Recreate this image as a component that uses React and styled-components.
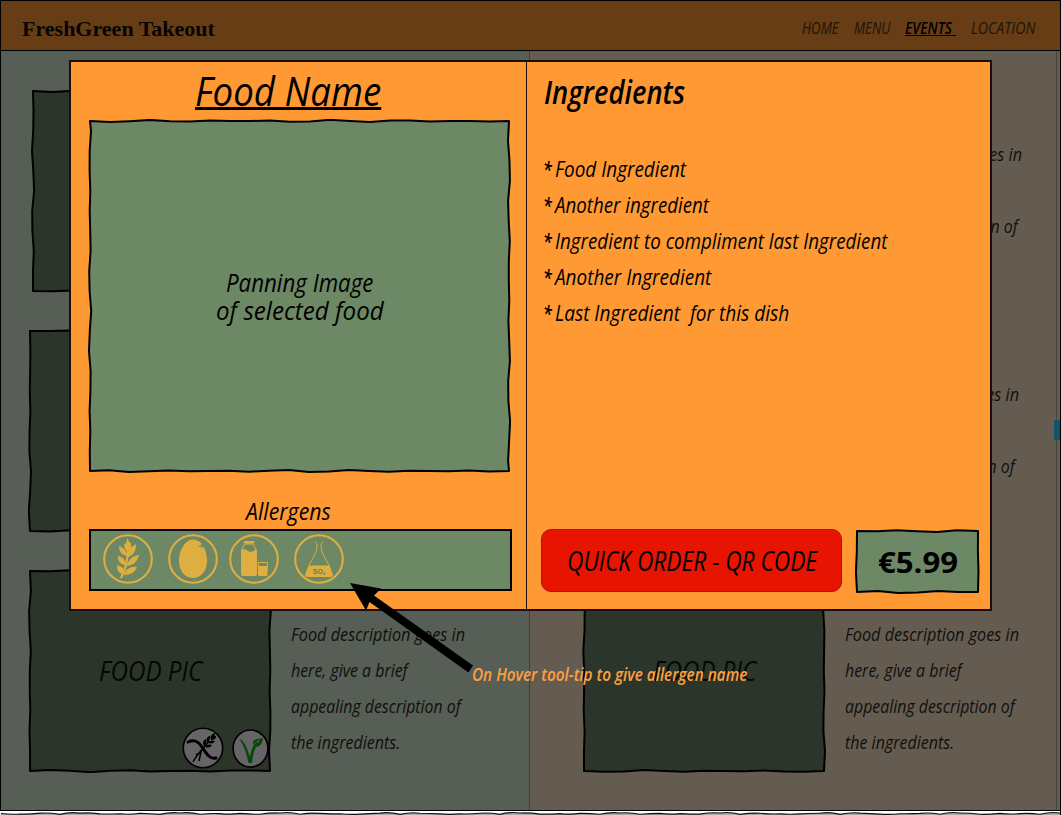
import React, { useLayoutEffect, useRef, useState } from "react";
import styled, { createGlobalStyle } from "styled-components";

const GlobalStyle = createGlobalStyle`
  * { box-sizing: border-box; }
  body { margin: 0; background: #fff; overflow: hidden; }
`;

const sketchFont = `"Open Sans", "Noto Sans", sans-serif`;

/* ---------- condensed handwriting-like text ---------- */

const TextSlot = styled.span`
  display: block;
  flex: none;
  width: ${(p) => p.$width}px;
  height: ${(p) => p.$line}px;
`;

const TextInk = styled.span`
  display: inline-block;
  white-space: pre;
  transform-origin: 0 0;
  font-family: ${(p) => (p.$serif ? `"Liberation Serif", serif` : sketchFont)};
  font-style: ${(p) => (p.$upright ? "normal" : "italic")};
  font-weight: ${(p) => p.$weight};
  font-size: ${(p) => p.$size}px;
  line-height: ${(p) => p.$line}px;
  color: ${(p) => p.$color};
  text-decoration: ${(p) => (p.$underline ? "underline" : "none")};
  text-decoration-thickness: ${(p) => p.$underline || 0}px;
  text-underline-offset: ${(p) => p.$offset || 1}px;
  text-decoration-skip-ink: none;
`;

function Condensed({ width, size, line = 36, weight = 400, color = "#000", serif, upright, underline, offset, children }) {
  const ink = useRef(null);
  const [scale, setScale] = useState(1);
  useLayoutEffect(() => {
    setScale(width / ink.current.offsetWidth);
  }, [width, size, children]);
  return (
    <TextSlot $width={width} $line={line}>
      <TextInk
        ref={ink}
        $size={size}
        $line={line}
        $weight={weight}
        $color={color}
        $serif={serif}
        $upright={upright}
        $underline={underline}
        $offset={offset}
        style={{ transform: `scaleX(${scale})` }}
      >
        {children}
      </TextInk>
    </TextSlot>
  );
}

/* ---------- hand-drawn box ---------- */

function wobble(w, h, seed) {
  const n = (i) => Math.sin(i * 2.3 + seed) * 0.75 + Math.sin(i * 5.1 + seed * 3) * 0.45;
  const pts = [];
  const step = 20;
  const m = 2;
  for (let x = m; x < w - m - 8; x += step) pts.push([x, m + (x > m ? n(x) : 0)]);
  for (let y = m; y < h - m - 8; y += step) pts.push([w - m + (y > m ? n(y + 7) : 0), y]);
  for (let x = w - m; x > m + 8; x -= step) pts.push([x, h - m + (x < w - m ? n(x + 3) : 0)]);
  for (let y = h - m; y > m + 8; y -= step) pts.push([m + (y < h - m ? n(y + 5) : 0), y]);
  return "M" + pts.map((p) => p.map((v) => v.toFixed(1)).join(" ")).join("L") + "Z";
}

const Box = styled.div`
  position: relative;
  flex: none;
  width: ${(p) => p.$w}px;
  height: ${(p) => p.$h}px;
  margin: ${(p) => p.$margin || 0};
  display: flex;
  flex-direction: column;
  align-items: center;
  justify-content: center;
`;

const BoxOutline = styled.svg`
  position: absolute;
  inset: 0;
  z-index: 0;
`;

const BoxContent = styled.div`
  position: relative;
  display: flex;
  flex-direction: column;
  align-items: center;
`;

function SketchBox({ w, h, fill, seed = 1, margin, overlay, children }) {
  return (
    <Box $w={w} $h={h} $margin={margin}>
      <BoxOutline width={w} height={h}>
        <path d={wobble(w, h, seed)} fill={fill} stroke="#000" strokeWidth="2" strokeLinejoin="round" />
      </BoxOutline>
      <BoxContent>{children}</BoxContent>
      {overlay}
    </Box>
  );
}

/* ---------- page behind the dialog ---------- */

const Screen = styled.div`
  position: relative;
  width: 1061px;
  height: 815px;
  overflow: hidden;
  border-right: 1px solid #000;
`;

const Page = styled.div`
  width: 1060px;
  height: 811px;
  border: 1px solid #000;
  border-right: 0;
  display: flex;
  flex-direction: column;
`;

const Header = styled.header`
  height: 50px;
  flex: none;
  background: #663d15;
  border-bottom: 1px solid #000;
  display: flex;
  justify-content: space-between;
  padding: 0 25px 0 21px;
`;

const Brand = styled.div`
  padding-top: 10px;
`;

const Nav = styled.nav`
  display: flex;
  gap: 15px;
  padding-top: 9px;
`;

const Columns = styled.main`
  flex: 1;
  display: flex;
  min-height: 0;
`;

const Column = styled.section`
  width: ${(p) => p.$w}px;
  background: ${(p) => p.$bg};
  border-right: 1px solid ${(p) => p.$edge};
  padding: 38px 0 0 ${(p) => p.$pad}px;
  display: flex;
  flex-direction: column;
  gap: 36px;
`;

const Gutter = styled.div`
  flex: 1;
  background: #655c51;
  padding-top: 369px;
`;

const Dish = styled.article`
  display: flex;
  gap: 19px;
  height: 204px;
  margin-left: ${(p) => p.$shift}px;
`;

const Description = styled.div`
  padding-top: 47px;
`;

const Badges = styled.div`
  position: absolute;
  right: 3px;
  bottom: 4px;
  display: flex;
  align-items: center;
  gap: 8px;
`;

const ScrollThumb = styled.div`
  width: 6px;
  height: 20px;
  margin-left: -3px;
  position: relative;
  background: #155468;
`;

function DietBadges() {
  return (
    <Badges>
      <svg width="42" height="42" viewBox="0 0 42 42">
        <circle cx="21" cy="21" r="19.7" fill="#666466" stroke="#000" strokeWidth="1.6" />
        <path d="M6 15C12 12 16 14 20 20S28 33 34 31" fill="none" stroke="#000" strokeWidth="3" strokeLinecap="round" />
        <path d="M11 35C15 27 21 22 27 14M14 28l5-3-2 9" fill="none" stroke="#000" strokeWidth="1.5" />
        <g fill="#000">
          <path d="M22 19c-2-4 0-6 2-7 1 3 0 5-2 7ZM25 15c-1-4 1-6 3-6 1 3-1 5-3 6ZM29 12c-1-3 1-5 4-6 0 3-1 5-4 6Z" />
          <path d="M23 20c4 1 6 0 7-2-3-1-5-1-7 2ZM26 16c4 1 6 0 7-2-3-1-5-1-7 2ZM29 13c3 0 5-1 5-4-3 0-5 1-5 4Z" />
        </g>
      </svg>
      <svg width="37" height="41" viewBox="0 0 37 41">
        <ellipse cx="18.5" cy="20.5" rx="17.4" ry="18.5" fill="#666466" stroke="#000" strokeWidth="1.6" />
        <path d="M7 11C12 11 16 23 18 29C20 20 21 17 25 14L27 16C22 20 21 26 20 35H16.500C15 26 11 15 7 11Z" fill="#06480a" />
        <path d="M21 17C20 11 25 11 31 10C30 17 27 20 22 18C25 16 27 14 28 12C25 13 23 15 21 17Z" fill="#06480a" />
      </svg>
    </Badges>
  );
}

const blurb = [
  ["Food description goes in", 174],
  ["here, give a brief", 117],
  ["appealing description of", 170],
  ["the ingredients.", 109],
];

function DishRow({ shift, seed, badges }) {
  return (
    <Dish $shift={shift}>
      <SketchBox w={244} h={204} fill="#2c3529" seed={seed} overlay={badges && <DietBadges />}>
        <Condensed width={103} size={27} color="#060705">FOOD PIC</Condensed>
      </SketchBox>
      <Description>
        {blurb.map(([text, width]) => (
          <Condensed key={text} width={width} size={18.5} color="#100f0c">{text}</Condensed>
        ))}
      </Description>
    </Dish>
  );
}

/* ---------- dialog ---------- */

const Dialog = styled.div`
  position: absolute;
  left: 69px;
  top: 60px;
  width: 923px;
  height: 551px;
  border: 2px solid #1a0f05;
  background: #ff9933;
  display: flex;
`;

const FoodPane = styled.section`
  width: 456px;
  flex: none;
  border-right: 1px solid #1a0f05;
`;

const FoodTitle = styled.h1`
  margin: 0;
  height: 57px;
  padding-left: 124px;
  font-weight: 400;
`;

const AllergenTitle = styled.h2`
  margin: 0;
  padding: 20px 0 0 175px;
  height: 56px;
`;

const AllergenBar = styled.div`
  margin-left: 18px;
  width: 423px;
  height: 62px;
  border: 2px solid #000;
  background: #6c8865;
  display: flex;
  align-items: center;
  padding: 0 0 2px 12px;
`;

const AllergenIcon = styled.svg`
  flex: none;
  width: 50px;
  height: 50px;
  margin-right: ${(p) => p.$gap || 0}px;
  color: #dfae41;
`;

const OrderPane = styled.section`
  flex: 1;
  padding-left: 14px;
  display: flex;
  flex-direction: column;
`;

const PaneHeading = styled.h2`
  margin: 0;
  padding: 12px 0 0 3px;
  height: 89px;
`;

const IngredientList = styled.ul`
  list-style: none;
  margin: 0;
  padding: 0 0 0 2px;
  height: 378px;
`;

const Ingredient = styled.li`
  height: 36px;
  display: flex;
  gap: 3px;
`;

const OrderRow = styled.div`
  display: flex;
  gap: 13px;
`;

const OrderButton = styled.button`
  width: 301px;
  height: 63px;
  border: 1px solid #b31205;
  border-radius: 10px;
  background: #e61400;
  padding: 0;
  display: flex;
  align-items: center;
  justify-content: center;
`;

const Ring = () => <circle cx="25" cy="25" r="23.800" fill="none" stroke="currentColor" strokeWidth="2.1" />;

function Wheat() {
  return (
    <AllergenIcon viewBox="0 0 50 50" $gap={15}>
      <Ring />
      <g fill="currentColor">
        <path d="M24.500 4L26 8L28 9V14L25 18L22 15L21 11L23 9Z" />
        <path d="M16 12C21 14 24 17 24 22C19 21 16 18 16 12ZM15 22C20 23 23 26 23 31C18 31 15 28 15 22ZM14 31C19 32 22 35 21 40C16 40 14 37 14 31Z" />
        <path d="M33 10C33 17 31 21 25 23C24 17 27 13 33 10ZM36 21C34 28 31 31 24 32C25 26 29 22 36 21ZM34 33C32 38 28 41 21 41C23 35 27 32 34 33Z" />
      </g>
      <path d="M25 13Q25 31 18 44" fill="none" stroke="currentColor" strokeWidth="2.2" />
    </AllergenIcon>
  );
}

function Egg() {
  return (
    <AllergenIcon viewBox="0 0 50 50" $gap={11}>
      <Ring />
      <path d="M25 5.500C30 5.500 34 10 34 10L30 13L34 12.500L33 15L35.500 12.500C38 17 39 22 39 27C39 37 33 44 25 44S11 37 11 27C11 15 18 5.500 25 5.500Z" fill="currentColor" />
    </AllergenIcon>
  );
}

function Milk() {
  return (
    <AllergenIcon viewBox="0 0 50 50" $gap={15}>
      <Ring />
      <rect x="14.500" y="7" width="11" height="2.500" rx="1" fill="currentColor" />
      <path d="M15.500 10L12.500 16.500V40Q12.500 41.500 14 41.500H26Q27.300 41.500 27.300 40V16.500L24.500 10Z" fill="none" stroke="currentColor" strokeWidth="1" />
      <path d="M12 16C15 15 16 15 19 17S24 17 27.800 15V40Q27.800 42 26 42H14Q12 42 12 40Z" fill="currentColor" />
      <path d="M29 28.500H38.500L37.800 41.500H29.700Z" fill="none" stroke="currentColor" strokeWidth="1" />
      <path d="M29 32H38.500L38 42H29.500Z" fill="currentColor" />
    </AllergenIcon>
  );
}

function Sulphite() {
  return (
    <AllergenIcon viewBox="0 0 50 50">
      <Ring />
      <path d="M21 7.500Q23 9 23 12C23 19 18 25 15 31.500M29 7.500Q27 9 27 12C27 19 32 25 35 31.500" fill="none" stroke="currentColor" strokeWidth="1" />
      <path d="M14.500 31.500H35.500L38.800 40Q39.500 43 36 43H14Q10.500 43 11.200 40Z" fill="currentColor" />
      <text x="25" y="39.500" textAnchor="middle" fontFamily="Liberation Sans, sans-serif" fontSize="7" fontWeight="700" fill="#6c7848">
        SO<tspan fontSize="4" dy="1">2</tspan>
      </text>
    </AllergenIcon>
  );
}

const ingredients = [
  ["Food Ingredient", 131],
  ["Another ingredient", 154],
  ["Ingredient to compliment last Ingredient", 332],
  ["Another Ingredient", 156],
  ["Last Ingredient  for this dish", 234],
];

/* ---------- callout over the dialog ---------- */

const CalloutArrow = styled.svg`
  position: absolute;
  left: 345px;
  top: 578px;
`;

const CalloutText = styled.div`
  position: absolute;
  left: 472px;
  top: 656px;
`;

const TornEdge = styled.svg`
  display: block;
`;

function BottomEdge() {
  let top = "M1 2.5";
  for (let x = 20; x <= 1060; x += 20) {
    top += `Q${x - 10} ${(2.2 + Math.sin(x) * 1.6).toFixed(1)} ${x} ${(2.7 + Math.sin(x * 1.7) * 0.7).toFixed(1)}`;
  }
  return (
    <TornEdge width="1060" height="4" viewBox="0 0 1060 4">
      <path d={`${top}V5H0Z`} fill="#aaa" />
      <path d={top} fill="none" stroke="#111" strokeWidth="1.100" />
    </TornEdge>
  );
}

export default function App() {
  return (
    <Screen>
      <GlobalStyle />
      <Page>
        <Header>
          <Brand>
            <Condensed width={193} size={22} line={36} weight={700} serif upright color="#080401">FreshGreen Takeout</Condensed>
          </Brand>
          <Nav>
            <Condensed width={37} size={15.5} color="#211307">HOME</Condensed>
            <Condensed width={36} size={15.5} color="#211307">MENU</Condensed>
            <Condensed width={51} size={15.5} weight={600} underline={1} offset={1}>{"EVENTS "}</Condensed>
            <Condensed width={64} size={15.5} color="#211307">LOCATION</Condensed>
          </Nav>
        </Header>
        <Columns>
          <Column $w={530} $bg="#565e55" $edge="#394235" $pad={27}>
            <DishRow shift={3} seed={1} />
            <DishRow shift={0} seed={2} />
            <DishRow shift={0} seed={3} badges />
          </Column>
          <Column $w={527} $bg="#655c51" $edge="#4a443d" $pad={52}>
            <DishRow shift={3} seed={4} />
            <DishRow shift={0} seed={5} />
            <DishRow shift={0} seed={6} />
          </Column>
          <Gutter>
            <ScrollThumb />
          </Gutter>
        </Columns>
      </Page>
      <BottomEdge />

      <Dialog>
        <FoodPane>
          <FoodTitle>
            <Condensed width={186} size={41} line={57} underline={2.5} offset={1}>Food Name</Condensed>
          </FoodTitle>
          <SketchBox w={423} h={354} fill="#6c8865" seed={7} margin="0 0 0 17px">
            <Condensed width={147} size={25} line={28} weight={500}>Panning Image</Condensed>
            <Condensed width={168} size={25} line={28} weight={500}>of selected food</Condensed>
          </SketchBox>
          <AllergenTitle>
            <Condensed width={85} size={24} line={36}>Allergens</Condensed>
          </AllergenTitle>
          <AllergenBar>
            <Wheat />
            <Egg />
            <Milk />
            <Sulphite />
          </AllergenBar>
        </FoodPane>
        <OrderPane>
          <PaneHeading>
            <Condensed width={141} size={33} line={36} weight={600}>Ingredients</Condensed>
          </PaneHeading>
          <IngredientList>
            {ingredients.map(([text, width]) => (
              <Ingredient key={text}>
                <Condensed width={9} size={21.5} weight={600}>*</Condensed>
                <Condensed width={width} size={21.5}>{text}</Condensed>
              </Ingredient>
            ))}
          </IngredientList>
          <OrderRow>
            <OrderButton>
              <Condensed width={250} size={27} weight={500}>QUICK ORDER - QR CODE</Condensed>
            </OrderButton>
            <SketchBox w={125} h={65} fill="#6c8865" seed={8}>
              <Condensed width={80} size={28} weight={700} upright>€5.99</Condensed>
            </SketchBox>
          </OrderRow>
        </OrderPane>
      </Dialog>

      <CalloutArrow width="135" height="100" viewBox="0 0 135 100">
        <path d="M5 5L36 10.500L29 17.500L128 87.500L123.500 94.500L24.500 24L21 32.500Z" fill="#000" />
      </CalloutArrow>
      <CalloutText>
        <Condensed width={275} size={18.5} weight={600} color="#ffa040">On Hover tool-tip to give allergen name</Condensed>
      </CalloutText>
    </Screen>
  );
}
